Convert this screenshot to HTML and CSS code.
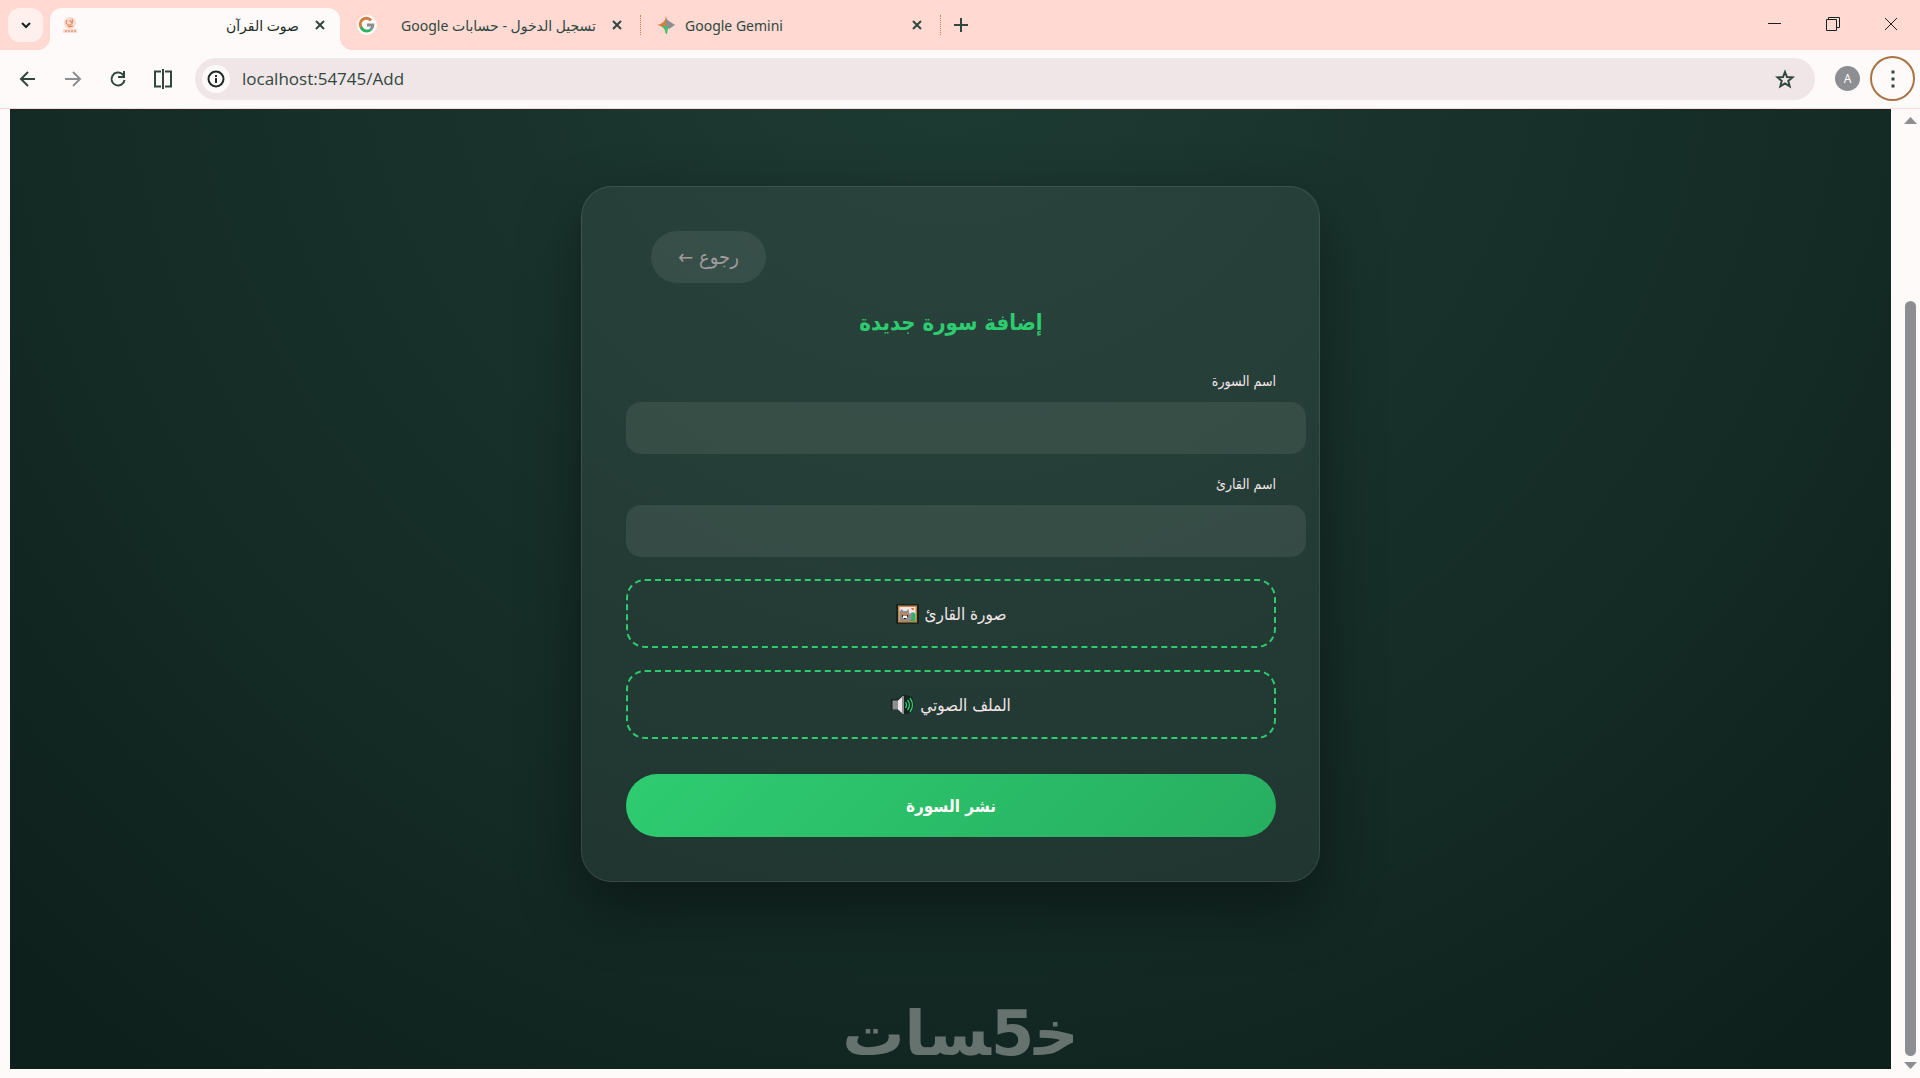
FILE: index.html
```html
<!DOCTYPE html>
<html lang="ar">
<head>
    <meta charset="UTF-8">
    <title>صوت القرآن</title>
    <link rel="stylesheet" href="styles.css">
</head>
<body>
<header class="tabs">
    <button class="tab-search" aria-label="Search tabs">
        <svg width="12" height="8" viewBox="0 0 12 8"><path d="M2 2l4 4 4-4" fill="none" stroke="#14241f" stroke-width="2"/></svg>
    </button>
    <div class="tab active">
        <svg class="favicon" width="16" height="18" viewBox="0 0 16 18">
            <circle cx="8" cy="7" r="6" fill="#ffd9d2"/>
            <path d="M5 4c-2 3 0 6 3 5s3-4 2-6M8 4c0 3 2 3 2 1M6 11l5-1" fill="none" stroke="#cf8040" stroke-width="1"/>
            <path d="M1 13h14v4H1z" fill="#ffd9d2"/>
            <path d="M3 15h11" stroke="#cf8040" stroke-width="1" stroke-dasharray="2 1"/>
        </svg>
        <span class="tab-title" dir="rtl">صوت القرآن</span>
        <button class="close" aria-label="Close"><svg width="10" height="10" viewBox="0 0 10 10"><path d="M1 1l8 8M9 1l-8 8"/></svg></button>
    </div>
    <div class="tab">
        <svg class="favicon" width="20" height="20" viewBox="0 0 20 20">
            <circle cx="10" cy="10" r="10" fill="#fffafa"/>
            <g fill="none" stroke-width="3">
                <path d="M4.500 13a6 6 0 0 1 9.500-7.500" stroke="#cf8040"/>
                <path d="M4.200 12.200a6 6 0 0 0 9.600 2.300" stroke="#2ab463"/>
                <path d="M10 10h5.800a6 6 0 0 1-2 4.500" stroke="#8d8e91"/>
            </g>
        </svg>
        <span class="tab-title" dir="rtl">تسجيل الدخول - حسابات Google</span>
        <button class="close" aria-label="Close"><svg width="10" height="10" viewBox="0 0 10 10"><path d="M1 1l8 8M9 1l-8 8"/></svg></button>
    </div>
    <div class="tab line">
        <svg class="favicon" width="18" height="18" viewBox="0 0 18 18">
            <path d="M9 0Q10 8 18 9Q10 10 9 18Q8 10 0 9Q8 8 9 0z" fill="#cf8040"/>
            <path d="M9 3l9 6-6 4-3-3z" fill="#8d8e91"/>
            <path d="M5 10h4l2 2-1 6H9L8 13z" fill="#2ecc71"/>
        </svg>
        <span class="tab-title">Google Gemini</span>
        <button class="close" aria-label="Close"><svg width="10" height="10" viewBox="0 0 10 10"><path d="M1 1l8 8M9 1l-8 8"/></svg></button>
    </div>
    <button class="new-tab line" aria-label="New tab">
        <svg width="14" height="14" viewBox="0 0 14 14"><path d="M7 0v14M0 7h14" stroke="#304740" stroke-width="2"/></svg>
    </button>
    <div class="window-buttons">
        <button aria-label="Minimize"><svg width="14" height="14" viewBox="0 0 14 14"><path d="M0 6.500h13"/></svg></button>
        <button aria-label="Restore"><svg width="14" height="14" viewBox="0 0 14 14"><path d="M.5 2.500h10v11H.5zM2.500 2.500v-2h11v10h-3"/></svg></button>
        <button aria-label="Close window"><svg width="14" height="14" viewBox="0 0 14 14"><path d="M1 1l12 12M13 1L1 13"/></svg></button>
    </div>
</header>

<nav class="toolbar">
    <div class="nav-buttons">
        <button aria-label="Back"><svg width="20" height="20" viewBox="0 0 20 20"><path d="M17 10H4M10 3l-7 7 7 7"/></svg></button>
        <button class="disabled" aria-label="Forward"><svg width="20" height="20" viewBox="0 0 20 20"><path d="M2 10h14M10 3l7 7-7 7"/></svg></button>
        <button aria-label="Reload"><svg width="20" height="20" viewBox="0 0 20 20"><path d="M16.500 11a6.500 6.500 0 1 1-2-5.700l2 2M16 2v6h-6"/></svg></button>
        <button aria-label="Split view"><svg width="22" height="22" viewBox="0 0 22 22"><path d="M9 3.500H3v15h6M11 1v20M13 3.500h6v15h-6"/></svg></button>
    </div>
    <div class="address">
        <button class="info" aria-label="Site information">
            <svg width="18" height="18" viewBox="0 0 18 18"><circle cx="9" cy="9" r="7.500" fill="none" stroke="#1c2b27" stroke-width="2"/><path d="M9 8v5M9 5v2" stroke="#1c2b27" stroke-width="2"/></svg>
        </button>
        <input class="url" type="text" aria-label="Address" value="localhost:54745/Add">
        <button class="star" aria-label="Bookmark">
            <svg width="20" height="20" viewBox="0 0 20 20"><path d="M10 3l2 5 5.500.4-4.200 3.500 1.400 5.400L10 14.400l-4.700 2.900 1.400-5.400L2.500 8.400 8 8z" fill="none" stroke="#304740" stroke-width="2"/></svg>
        </button>
    </div>
    <button class="avatar">A</button>
    <button class="more" aria-label="Menu">
        <svg width="4" height="18" viewBox="0 0 4 18"><path d="M.5.500h3v3h-3zM.5 7.500h3v3h-3zM.5 14.500h3v3h-3z" fill="#304740"/></svg>
    </button>
</nav>

<div class="view">
    <main class="page">
        <form class="card">
            <button type="button" class="back" dir="rtl">رجوع ←</button>
            <h1 dir="rtl">إضافة سورة جديدة</h1>
            <label class="field-label" for="surah" dir="rtl">اسم السورة</label>
            <input class="field" type="text" id="surah" dir="rtl">
            <label class="field-label" for="reader" dir="rtl">اسم القارئ</label>
            <input class="field" type="text" id="reader" dir="rtl">
            <label class="upload" dir="rtl">
                <span>صورة القارئ</span>
                <svg width="23" height="20" viewBox="0 0 23 20">
                    <path d="M0 0h23v20H0z" fill="#14241f"/>
                    <path d="M2 1.500h19v17H2z" fill="#cf8040"/>
                    <path d="M3.500 3h16v14h-16z" fill="#f1e6e7"/>
                    <path d="M12 17l3-7 2-2 2.500 2v7z" fill="#2ab463"/>
                    <path d="M3.500 17V8l2-3 2 2h3l2-2 1 5 3-2-1 7-2 2z" fill="#8d8e91"/>
                    <path d="M5 9h7v2H5zM15 4h3v2h-2z" fill="#cf8040"/>
                    <path d="M7 12h4v2H7z" fill="#fffafa"/>
                    <path d="M6 11h1v2H6zM11 11h1v2h-1zM8 14h2v1H8z" fill="#14241f"/>
                </svg>
                <input type="file" accept="image/*">
            </label>
            <label class="upload" dir="rtl">
                <span>الملف الصوتي</span>
                <svg width="23" height="20" viewBox="0 0 23 20">
                    <path d="M0 4h7l5-4h4l5 2 2 8-2 7-5 2h-4l-5-4H0z" fill="#14241f"/>
                    <path d="M1.500 5.500h6v9h-6z" fill="#8d8e91"/>
                    <path d="M7 5.500L12 1v18l-5-4.500z" fill="#f1e6e7"/>
                    <path d="M11 1h2v18h-2z" fill="#8d8e91"/>
                    <path d="M14.500 7q2 3 0 6M16.500 5q4 5 0 10M19 3q5 7 0 14" fill="none" stroke="#2ecc71" stroke-width="1.300"/>
                </svg>
                <input type="file" accept="audio/*">
            </label>
            <button type="submit" class="publish" dir="rtl">نشر السورة</button>
        </form>
        <div class="watermark" dir="rtl">خ&zwj;5&zwj;سات</div>
    </main>
    <div class="scrollbar">
        <svg width="13" height="7" viewBox="0 0 13 7"><path d="M6.500 0L13 7H0z" fill="#8d8e91"/></svg>
        <div class="track"><div class="thumb"></div></div>
        <svg width="13" height="7" viewBox="0 0 13 7"><path d="M0 0h13L6.500 7z" fill="#8d8e91"/></svg>
    </div>
</div>
</body>
</html>
```
FILE: styles.css
```css
* {
    box-sizing: border-box;
}

body {
    margin: 0;
    min-height: 100vh;
    display: flex;
    flex-direction: column;
    background: #fffafa;
    font-family: "Noto Sans", "DejaVu Sans", sans-serif;
    color: #304740;
}

button {
    display: flex;
    align-items: center;
    justify-content: center;
    padding: 0;
    border: 0;
    background: none;
    color: inherit;
    font-family: inherit;
}

svg {
    flex: none;
}

/* tab strip */
.tabs {
    display: flex;
    height: 50px;
    padding: 8px 0 0 8px;
    background: #ffd9d2;
}

.tab-search {
    width: 35px;
    height: 34px;
    margin-right: 7px;
    border-radius: 12px;
    background: #fff0ee;
}

.tab {
    position: relative;
    display: flex;
    align-items: center;
    width: 300px;
    height: 34px;
    padding: 0 17px;
    font-size: 14px;
}

.tab.active {
    width: 290px;
    height: 42px;
    padding: 0 14px 8px 12px;
    border-radius: 12px 12px 0 0;
    background: #fffafa;
    color: #1c2b27;
}

/* curved feet of the open tab */
.tab.active::before,
.tab.active::after {
    content: "";
    position: absolute;
    bottom: 0;
    width: 12px;
    height: 12px;
}

.tab.active::before {
    left: -12px;
    background: radial-gradient(circle at 0 0, transparent 12px, #fffafa 12px);
}

.tab.active::after {
    right: -12px;
    background: radial-gradient(circle at 100% 0, transparent 12px, #fffafa 12px);
}

.tab-title {
    flex: 1;
    padding: 0 15px 0 12px;
    white-space: nowrap;
    text-align: right;
}

.line .tab-title {
    padding-left: 10px;
    text-align: left;
}

.close {
    width: 12px;
    height: 20px;
}

.close path {
    stroke: #304740;
    stroke-width: 2;
}

.line::before {
    content: "";
    position: absolute;
    left: 0;
    height: 20px;
    border-left: 1px dotted #cf8040;
}

.new-tab {
    position: relative;
    width: 42px;
    height: 34px;
}

.window-buttons {
    display: flex;
    gap: 30px;
    margin-left: auto;
    padding-right: 15px;
}

.window-buttons button {
    width: 28px;
    height: 32px;
}

.window-buttons path {
    fill: none;
    stroke: #14241f;
}

/* address bar */
.toolbar {
    display: flex;
    align-items: center;
    height: 59px;
    padding: 0 5px 1px 10px;
    border-bottom: 1px solid #ffd9d2;
    background: #fffafa;
}

.nav-buttons {
    display: flex;
    gap: 9px;
    width: 185px;
}

.nav-buttons button {
    width: 36px;
    height: 36px;
}

.nav-buttons path {
    fill: none;
    stroke: #304740;
    stroke-width: 2;
}

.nav-buttons .disabled path {
    stroke: #8d8e91;
}

.address {
    flex: 1;
    display: flex;
    align-items: center;
    height: 42px;
    padding: 0 20px 0 7px;
    border-radius: 21px;
    background: #f1e6e7;
}

.info {
    width: 28px;
    height: 28px;
    border-radius: 50%;
    background: #fffafa;
}

.url {
    flex: 1;
    padding: 0 0 0 12px;
    border: 0;
    outline: 0;
    background: none;
    color: #304740;
    font: 17px "Open Sans", sans-serif;
}

.avatar {
    width: 25px;
    height: 25px;
    margin: 0 10px 0 20px;
    border-radius: 50%;
    background: #8d8e91;
    color: #fffafa;
    font-size: 12px;
}

.more {
    width: 45px;
    height: 45px;
    border: 2px solid #a87443;
    border-radius: 50%;
}

/* web page */
.view {
    flex: 1;
    display: flex;
    padding: 0 0 9px 10px;
}

.page {
    flex: 1;
    display: flex;
    flex-direction: column;
    align-items: center;
    justify-content: space-between;
    padding: 77px 20px 0;
    background: radial-gradient(circle 1500px at 50% -116px, #1e3c33 0%, #142a25 62%, #0e201b 90%);
    font-family: "DejaVu Sans Condensed", "DejaVu Sans", sans-serif;
}

.card {
    display: flex;
    flex-direction: column;
    width: 739px;
    padding: 44px 43px 44px 44px;
    border: 1px solid rgba(255, 255, 255, .1);
    border-radius: 31px;
    background: rgba(255, 255, 255, .06);
    box-shadow: 0 25px 62px rgba(0, 0, 0, .4);
}

.back {
    align-self: flex-start;
    width: 115px;
    height: 52px;
    margin-left: 25px;
    border-radius: 26px;
    background: rgba(255, 255, 255, .08);
    color: #a09c9d;
    font-size: 20px;
}

h1 {
    margin: 20px 0 24px;
    color: #2ecc71;
    font-size: 22px;
    line-height: 40px;
    text-align: center;
}

.field-label {
    height: 35px;
    color: #f1e6e7;
    font-size: 14px;
    line-height: 28px;
}

/* the fields run past the right edge of the form column */
.field {
    width: calc(100% + 30px);
    height: 52px;
    margin-bottom: 16px;
    padding: 0 15px;
    border: 0;
    border-radius: 15px;
    background: rgba(255, 255, 255, .08);
    color: #fffafa;
    font-size: 16px;
}

.upload {
    display: flex;
    align-items: center;
    justify-content: center;
    gap: 6px;
    height: 69px;
    margin: 6px 0 16px;
    border: 2px dashed #2ecc71;
    border-radius: 19px;
    color: #f1e6e7;
    font-size: 17px;
}

.upload input {
    position: absolute;
    width: 1px;
    height: 1px;
    opacity: 0;
}

.publish {
    height: 63px;
    margin-top: 19px;
    border-radius: 32px;
    background: linear-gradient(135deg, #2ecc71, #27ae60);
    color: #fffafa;
    font-size: 17px;
    font-weight: bold;
}

.watermark {
    padding-left: 20px;
    color: #65726e;
    font-family: "DejaVu Sans", sans-serif;
    font-size: 62px;
    font-weight: bold;
    line-height: 70px;
}

/* scrollbar */
.scrollbar {
    display: flex;
    flex-direction: column;
    align-items: center;
    width: 29px;
    padding: 8px 0 0 10px;
}

.scrollbar .track {
    flex: 1;
    display: flex;
    flex-direction: column;
    justify-content: flex-end;
    width: 11px;
    padding-bottom: 6px;
}

.scrollbar .thumb {
    height: 81%;
    border-radius: 6px;
    background: #8d8e91;
}
```
